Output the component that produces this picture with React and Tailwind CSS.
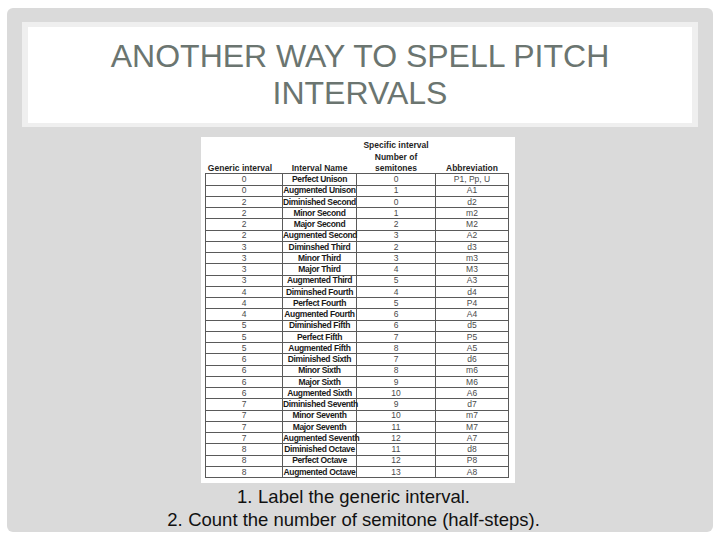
import React from "react";

const rows = [
  ["0", "Perfect Unison", "0", "P1, Pp, U"],
  ["0", "Augmented Unison", "1", "A1"],
  ["2", "Diminished Second", "0", "d2"],
  ["2", "Minor Second", "1", "m2"],
  ["2", "Major Second", "2", "M2"],
  ["2", "Augmented Second", "3", "A2"],
  ["3", "Diminshed Third", "2", "d3"],
  ["3", "Minor Third", "3", "m3"],
  ["3", "Major Third", "4", "M3"],
  ["3", "Augmented Third", "5", "A3"],
  ["4", "Diminshed Fourth", "4", "d4"],
  ["4", "Perfect Fourth", "5", "P4"],
  ["4", "Augmented Fourth", "6", "A4"],
  ["5", "Diminished Fifth", "6", "d5"],
  ["5", "Perfect Fifth", "7", "P5"],
  ["5", "Augmented Fifth", "8", "A5"],
  ["6", "Diminished Sixth", "7", "d6"],
  ["6", "Minor Sixth", "8", "m6"],
  ["6", "Major Sixth", "9", "M6"],
  ["6", "Augmented Sixth", "10", "A6"],
  ["7", "Diminished Seventh", "9", "d7"],
  ["7", "Minor Seventh", "10", "m7"],
  ["7", "Major Seventh", "11", "M7"],
  ["7", "Augmented Seventh", "12", "A7"],
  ["8", "Diminished Octave", "11", "d8"],
  ["8", "Perfect Octave", "12", "P8"],
  ["8", "Augmented Octave", "13", "A8"],
];

const IntervalTable = () => {
  const cell = "border border-[#5a5a5a] p-0 text-center leading-none whitespace-nowrap";
  return (
    <table className="table-fixed border-collapse w-[303px] text-[8.5px] font-['Liberation_Sans',Arial,sans-serif]">
      <colgroup>
        <col className="w-[77px]" />
        <col className="w-[74px]" />
        <col className="w-[79px]" />
        <col className="w-[73px]" />
      </colgroup>
      <thead className="text-[#1f1f1f]">
        <tr className="h-[11.25px]">
          <th className="p-0" />
          <th className="p-0" />
          <th className="p-0 font-bold leading-none whitespace-nowrap">Specific interval</th>
          <th className="p-0" />
        </tr>
        <tr className="h-[11.25px]">
          <th className="p-0" />
          <th className="p-0" />
          <th className="p-0 font-bold leading-none whitespace-nowrap">Number of</th>
          <th className="p-0" />
        </tr>
        <tr className="h-[11.25px]">
          <th className="p-0 pr-[8px] font-bold leading-none whitespace-nowrap">Generic interval</th>
          <th className="p-0 font-bold leading-none whitespace-nowrap">Interval Name</th>
          <th className="p-0 font-bold leading-none whitespace-nowrap">semitones</th>
          <th className="p-0 font-bold leading-none whitespace-nowrap">Abbreviation</th>
        </tr>
      </thead>
      <tbody>
        {rows.map((r) => (
          <tr key={r[1]} className="h-[11.25px]">
            <td className={`${cell} text-[#4a4a4a]`}>{r[0]}</td>
            <td className={`${cell} font-bold tracking-[-0.35px] text-[#1a1a1a]`}>{r[1]}</td>
            <td className={`${cell} text-[#4a4a4a]`}>{r[2]}</td>
            <td className={`${cell} text-[#4a4a4a]`}>{r[3]}</td>
          </tr>
        ))}
      </tbody>
    </table>
  );
};

export default function App() {
  return (
    <div className="w-[720px] h-[540px] bg-white pt-[8px] pl-[7px] overflow-hidden font-['Liberation_Sans',Arial,sans-serif]">
      <div className="w-[706px] h-[524px] rounded-[6px] bg-[#dadada] pt-[14px] flex flex-col">
        {/* Title */}
        <div className="ml-[15px] w-[676px] h-[105px] border-x-[6px] border-t-[5px] border-b-[4px] border-[#efefef] bg-white pt-[11px]">
          <h1 className="text-center text-[32px] leading-[37px] text-[#6b7570] font-normal">
            ANOTHER WAY TO SPELL PITCH
            <br />
            INTERVALS
          </h1>
        </div>

        {/* Table picture */}
        <div className="mt-[10px] ml-[194px] w-[314px] h-[346px] bg-white pt-[3px] pl-[4px]">
          <IntervalTable />
        </div>

        {/* Steps */}
        <div className="mt-[2px] pr-[13px] text-[18.5px] leading-[23px] text-[#111]">
          <div className="flex justify-center">
            <span className="w-[21px] flex-none">1.</span>
            <span>Label the generic interval.</span>
          </div>
          <div className="flex justify-center">
            <span className="w-[21px] flex-none">2.</span>
            <span>Count the number of semitone (half-steps).</span>
          </div>
        </div>
      </div>
    </div>
  );
}
